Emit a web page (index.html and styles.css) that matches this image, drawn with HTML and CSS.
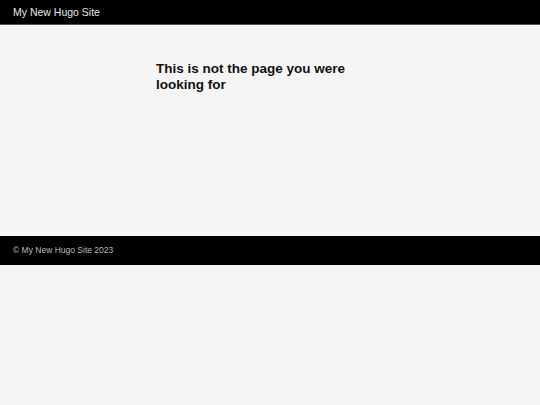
FILE: index.html
```html
<!DOCTYPE html>
<html>
<head>
<meta charset="utf-8">
<link rel="stylesheet" href="styles.css">
</head>
<body>
<header class="site-header">My New Hugo Site</header>
<main class="site-main">
  <h1 class="title">This is not the page you were looking for</h1>
</main>
<footer class="site-footer">© My New Hugo Site 2023</footer>
</body>
</html>
```
FILE: styles.css
```css
html, body {
  margin: 0;
  padding: 0;
  background: #f5f5f5;
  font-family: "Liberation Sans", Arial, sans-serif;
}
.site-header {
  background: #000;
  color: #e8e8e8;
  font-size: 10.5px;
  height: 25px;
  line-height: 24px;
  padding-left: 13px;
  box-sizing: border-box;
  border-bottom: 1px solid #555;
}
.site-main {
  height: 211px;
  box-sizing: border-box;
  padding-top: 36px;
}
.title {
  width: 228px;
  margin: 0 auto;
  font-size: 13.5px;
  line-height: 15.5px;
  color: #111;
  font-weight: bold;
}
.site-footer {
  background: #000;
  color: #bbb;
  font-size: 8.5px;
  height: 29px;
  line-height: 29px;
  padding-left: 13px;
}
```
